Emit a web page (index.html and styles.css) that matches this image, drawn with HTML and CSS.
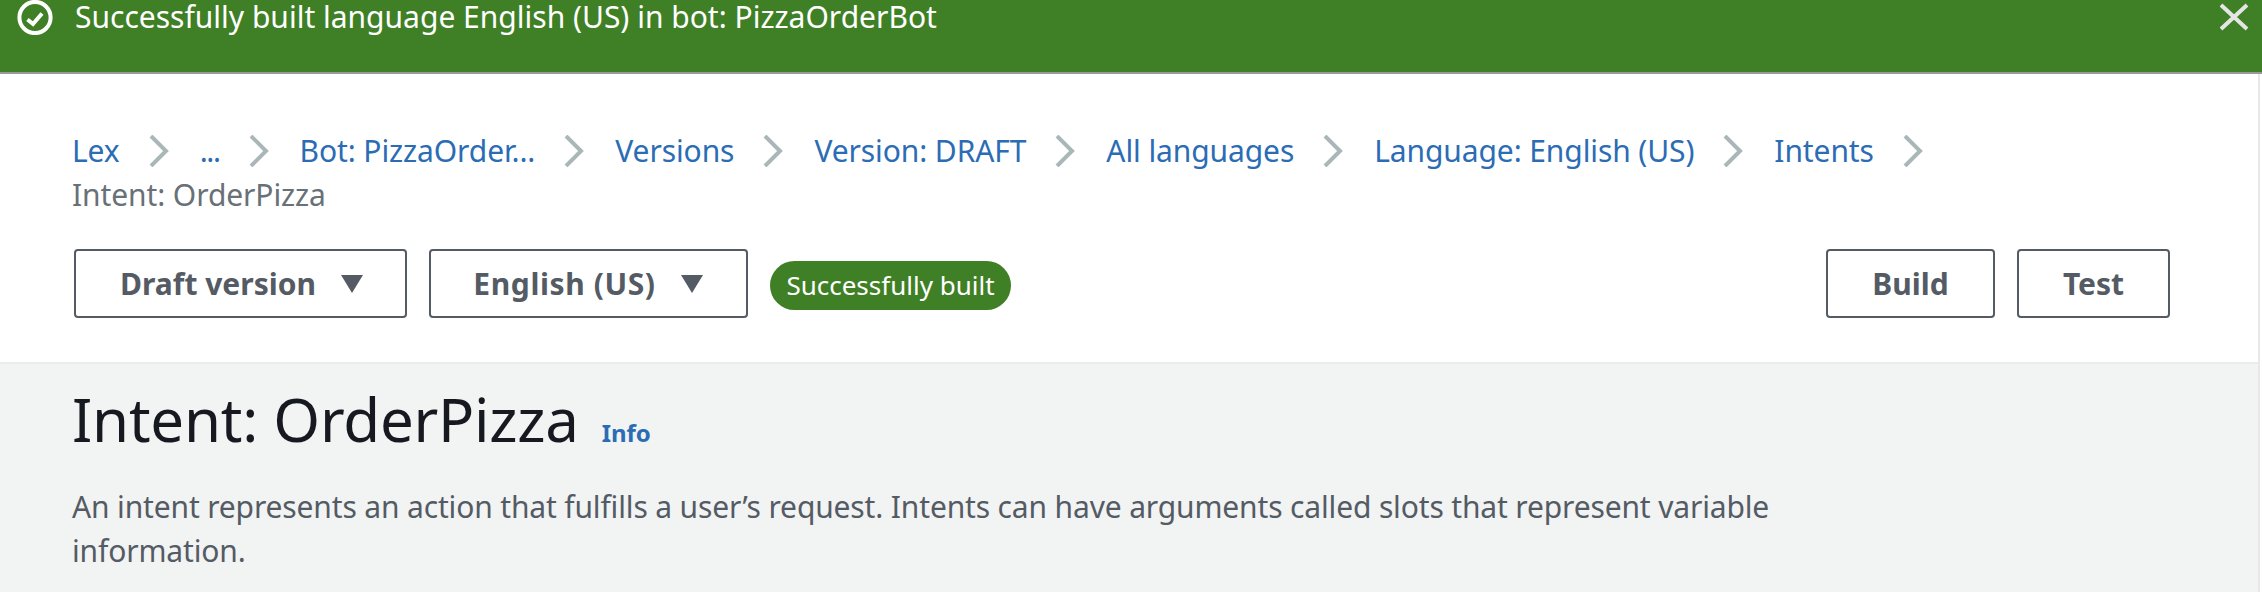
FILE: index.html
```html
<!DOCTYPE html>
<html lang="en">
<head>
<meta charset="utf-8">
<title>Intent: OrderPizza</title>
<link rel="stylesheet" href="styles.css">
</head>
<body>
<div class="flash">
  <svg class="flash-check" viewBox="0 0 36 36" aria-hidden="true"><circle cx="18" cy="18.5" r="15.6"/><path d="M10.5 20.5l5.5 4.5 9-10.500"/></svg>
  <span class="flash-text">Successfully built language English (US) in bot: PizzaOrderBot</span>
  <svg class="flash-close" viewBox="0 0 30 28" aria-hidden="true"><path d="M2 2l26 24M28 2L2 26"/></svg>
</div>
<div class="page">
<div class="panel">
  <nav class="crumbs">
    <a class="crumb">Lex</a><svg class="chev" viewBox="0 0 20 32"><path d="M2 1l15 15L2 31"/></svg>
    <a class="crumb crumb-more">...</a><svg class="chev" viewBox="0 0 20 32"><path d="M2 1l15 15L2 31"/></svg>
    <a class="crumb">Bot: PizzaOrder...</a><svg class="chev" viewBox="0 0 20 32"><path d="M2 1l15 15L2 31"/></svg>
    <a class="crumb">Versions</a><svg class="chev" viewBox="0 0 20 32"><path d="M2 1l15 15L2 31"/></svg>
    <a class="crumb">Version: DRAFT</a><svg class="chev" viewBox="0 0 20 32"><path d="M2 1l15 15L2 31"/></svg>
    <a class="crumb">All languages</a><svg class="chev" viewBox="0 0 20 32"><path d="M2 1l15 15L2 31"/></svg>
    <a class="crumb">Language: English (US)</a><svg class="chev" viewBox="0 0 20 32"><path d="M2 1l15 15L2 31"/></svg>
    <a class="crumb">Intents</a><svg class="chev" viewBox="0 0 20 32"><path d="M2 1l15 15L2 31"/></svg>
    <span class="crumb current">Intent: OrderPizza</span>
  </nav>
  <div class="toolbar">
    <button class="btn btn-draft">Draft version<svg class="caret" viewBox="0 0 24 20"><path d="M1 1h22L12 19z"/></svg></button>
    <button class="btn btn-lang">English (US)<svg class="caret" viewBox="0 0 24 20"><path d="M1 1h22L12 19z"/></svg></button>
    <span class="badge">Successfully built</span>
    <span class="spacer"></span>
    <button class="btn btn-build">Build</button>
    <button class="btn btn-test">Test</button>
  </div>
</div>
<main class="content">
  <div class="title-row"><h1 class="title">Intent: OrderPizza</h1><a class="info">Info</a></div>
  <p class="desc">An intent represents an action that fulfills a user’s request. Intents can have arguments called slots that represent variable information.</p>
</main>
</div>
</body>
</html>
```
FILE: styles.css
```css
* { box-sizing: border-box; }
html, body { margin: 0; height: 100%; }
body {
  font-family: "Noto Sans", "Open Sans", sans-serif;
  font-size: 30px;
  color: #545b64;
  background: #fff;
  overflow: hidden;
}
.flash {
  height: 74px;
  background: #3f7f25;
  border-bottom: 2px solid #999;
  color: #fff;
  display: flex;
  align-items: flex-start;
  padding-left: 17px;
  padding-right: 13px;
}
.flash-check {
  width: 36px;
  height: 36px;
  margin-top: -1px;
  fill: none;
  stroke: #fff;
  stroke-width: 4;
}
.flash-text { margin-left: 22px; line-height: 34px; flex: 1; }
.flash-close {
  width: 30px;
  height: 28px;
  margin-top: 3px;
  fill: none;
  stroke: #e4e6e6;
  stroke-width: 4;
}
.page {
  margin-right: 2px;
  border-right: 2px solid #e8e8e8;
}
.panel {
  height: 290px;
  padding: 55px 88px 0 72px;
  border-bottom: 2px solid #eaeded;
}
.crumbs {
  display: flex;
  flex-wrap: wrap;
  align-items: center;
  column-gap: 30px;
  line-height: 44px;
  letter-spacing: -0.1px;
}
.crumb { color: #2b6cb4; white-space: nowrap; }
.crumb-more { letter-spacing: -1.4px; }
.crumb.current { color: #687078; width: 100%; letter-spacing: -0.1px; }
.chev {
  width: 20px;
  height: 32px;
  margin-left: -1px;
  margin-right: 1px;
  fill: none;
  stroke: #aab7b8;
  stroke-width: 4;
}
.toolbar {
  display: flex;
  align-items: center;
  gap: 22px;
  margin-top: 32px;
  padding-left: 2px;
}
.btn {
  height: 69px;
  background: #fff;
  border: 2px solid #545b64;
  border-radius: 4px;
  font: 700 30px "Noto Sans", "Open Sans", sans-serif;
  color: #545b64;
  display: flex;
  align-items: center;
  justify-content: center;
  gap: 24px;
  padding: 0;
}
.btn-draft { width: 333px; padding-left: 3px; }
.btn-lang { width: 319px; letter-spacing: 0.6px; }
.btn-build { width: 169px; }
.btn-test { width: 153px; }
.caret { width: 24px; height: 20px; fill: #545b64; }
.badge {
  height: 49px;
  width: 241px;
  margin-top: 4px;
  border-radius: 25px;
  background: #3f7f25;
  color: #fff;
  font-size: 26px;
  line-height: 49px;
  text-align: center;
}
.spacer { flex: 1; }
.content {
  background: #f2f3f3;
  height: 228px;
  padding: 0 72px;
}
.title-row { display: flex; align-items: baseline; gap: 23px; padding-top: 19px; }
.title { margin: 0; font-size: 60px; font-weight: 400; line-height: 72px; letter-spacing: -0.25px; color: #16191f; }
.info { font-size: 24px; font-weight: 700; color: #2b6cb4; }
.desc { margin: 30px 0 0; width: 1760px; line-height: 44px; letter-spacing: -0.15px; }
```
